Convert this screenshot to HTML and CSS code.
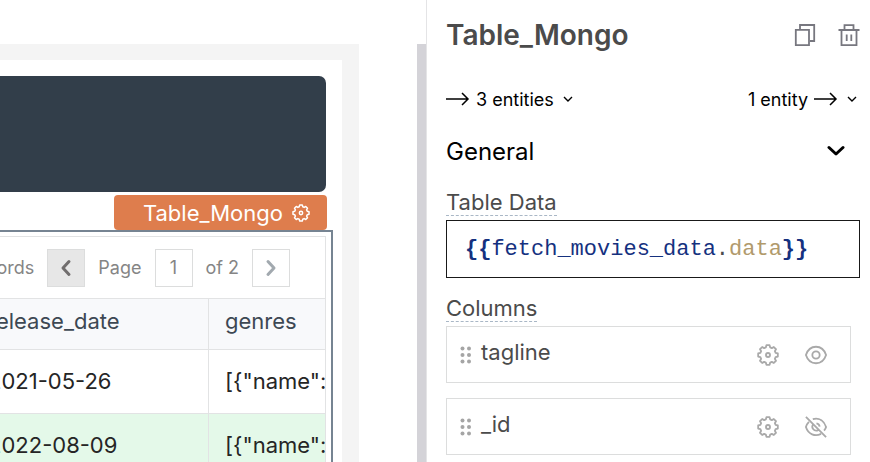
FILE: index.html
```html
<!DOCTYPE html>
<html lang="en">
<head>
<meta charset="utf-8">
<title>Table_Mongo</title>
<link rel="stylesheet" href="styles.css">
</head>
<body>
<svg class="sprite" aria-hidden="true">
  <symbol id="gear" viewBox="0 0 24 24">
    <path d="M10.300 1.300H13.700L14.400 3.700L16.200 4.500L18.350 3.300L20.700 5.650L19.500 7.800L20.300 9.600L22.700 10.300V13.700L20.300 14.400L19.500 16.200L20.700 18.350L18.350 20.700L16.200 19.500L14.400 20.300L13.700 22.700H10.300L9.600 20.300L7.800 19.500L5.650 20.700L3.300 18.350L4.500 16.200L3.700 14.400L1.300 13.700V10.300L3.700 9.600L4.500 7.800L3.300 5.650L5.650 3.300L7.800 4.500L9.600 3.700Z" fill="none" stroke="currentColor" stroke-width="2" stroke-linejoin="round"/>
    <circle cx="12" cy="12" r="2.2" fill="none" stroke="currentColor" stroke-width="2"/>
  </symbol>
  <symbol id="arrow" viewBox="0 0 24 16">
    <path d="M0 8H22M16 2L22 8L16 14" fill="none" stroke="currentColor" stroke-width="1.5"/>
  </symbol>
  <symbol id="chevron" viewBox="0 0 10 6">
    <path d="M1 1L5 5L9 1" fill="none" stroke="currentColor" stroke-width="1.4"/>
  </symbol>
  <symbol id="grip" viewBox="0 0 12 18">
    <g fill="currentColor"><circle cx="2.5" cy="2.5" r="2"/><circle cx="9" cy="2.5" r="2"/><circle cx="2.5" cy="9" r="2"/><circle cx="9" cy="9" r="2"/><circle cx="2.5" cy="15.5" r="2"/><circle cx="9" cy="15.5" r="2"/></g>
  </symbol>
</svg>
<div class="app">
  <main class="canvas">
    <div class="artboard">
      <div class="sheet">
        <div class="banner"></div>
        <div class="tag-row">
          <button class="tag" type="button">Table_Mongo<svg class="tag-gear"><use href="#gear"/></svg></button>
        </div>
        <section class="widget">
          <div class="widget-inner">
            <div class="toolbar">
              <span>Records</span>
              <button class="pager pager-off" type="button" aria-label="Previous page"><svg viewBox="0 0 12 18"><path d="M9 2.5L3 9L9 15.5" fill="none" stroke="currentColor" stroke-width="3" stroke-linecap="round" stroke-linejoin="round"/></svg></button>
              <label for="page">Page</label>
              <input id="page" class="page" type="text" value="1">
              <span>of 2</span>
              <button class="pager" type="button" aria-label="Next page"><svg viewBox="0 0 12 18"><path d="M3 2.5L9 9L3 15.5" fill="none" stroke="currentColor" stroke-width="3" stroke-linecap="round" stroke-linejoin="round"/></svg></button>
            </div>
            <div class="table-clip">
              <table>
                <colgroup><col class="col-date"><col class="col-genres"></colgroup>
                <thead><tr><th>release_date</th><th>genres</th></tr></thead>
                <tbody>
                  <tr><td>2021-05-26</td><td>[{"name":</td></tr>
                  <tr class="selected"><td>2022-08-09</td><td>[{"name":</td></tr>
                </tbody>
              </table>
            </div>
          </div>
        </section>
      </div>
    </div>
    <div class="scrollbar"></div>
  </main>
  <aside class="panel">
    <header class="panel-head">
      <h1>Table_Mongo</h1>
      <button class="icon-btn" type="button" aria-label="Copy"><svg class="head-icon" viewBox="0 0 22 22"><path d="M1.8 5.8H15V21.2H1.8Z M6 5V1H20.2V17H16" fill="none" stroke="currentColor" stroke-width="1.8"/></svg></button>
      <button class="icon-btn" type="button" aria-label="Delete"><svg class="head-icon" viewBox="0 0 22 22"><path d="M0.5 6H21.5M3.5 6V21.2H18.5V6M6.5 6V1.2H15.5V6M8.7 10.5V17M13.3 10.5V17" fill="none" stroke="currentColor" stroke-width="1.8"/></svg></button>
    </header>
    <div class="entities">
      <button class="entity" type="button"><svg class="arrow"><use href="#arrow"/></svg>3 entities<svg class="mini"><use href="#chevron"/></svg></button>
      <button class="entity" type="button">1 entity<svg class="arrow"><use href="#arrow"/></svg><svg class="mini"><use href="#chevron"/></svg></button>
    </div>
    <button class="section" type="button">General<svg viewBox="0 0 18 12"><path d="M2 2.5L9 9L16 2.5" fill="none" stroke="currentColor" stroke-width="3" stroke-linecap="round" stroke-linejoin="round"/></svg></button>
    <div class="label" id="data-label"><span>Table Data</span></div>
    <div class="code" role="textbox" contenteditable="true" spellcheck="false" aria-labelledby="data-label"><b>{{</b><span class="name">fetch_movies_data</span>.<span class="prop">data</span><b>}}</b></div>
    <div class="label"><span>Columns</span></div>
    <ul class="columns">
      <li>
        <svg class="grip"><use href="#grip"/></svg><span class="col-name">tagline</span>
        <button class="icon-btn" type="button" aria-label="Edit tagline"><svg class="item-icon"><use href="#gear"/></svg></button>
        <button class="icon-btn" type="button" aria-label="Hide tagline"><svg class="item-icon" viewBox="0 0 24 24"><g fill="none" stroke="currentColor" stroke-width="2"><path d="M1 12C3 6 7 3 12 3S21 6 23 12C21 18 17 21 12 21S3 18 1 12Z"/><circle cx="12" cy="12" r="4"/></g></svg></button>
      </li>
      <li>
        <svg class="grip"><use href="#grip"/></svg><span class="col-name">_id</span>
        <button class="icon-btn" type="button" aria-label="Edit _id"><svg class="item-icon"><use href="#gear"/></svg></button>
        <button class="icon-btn" type="button" aria-label="Show _id"><svg class="item-icon" viewBox="0 0 24 24"><g fill="none" stroke="currentColor" stroke-width="2"><path d="M1 1L23 23M8.500 3.500C16 1.500 21 6 23 12Q22.300 14.300 20.800 16M4.300 6.500Q2 8.800 1 12C3.500 20 11 22.800 17.500 19.500M8.800 9.300C6.500 12.500 9.500 17 14 15.600M12.500 8Q15.500 8.500 16 11.500"/></g></svg></button>
      </li>
    </ul>
  </aside>
</div>
</body>
</html>
```

FILE: styles.css
```css
* { box-sizing: border-box; }
body { margin: 0; font-family: Inter, "Liberation Sans", sans-serif; background: #fff; color: #4b4b4b; }
button { font: inherit; color: inherit; background: none; border: 0; padding: 0; }
svg { display: block; flex: none; }
.sprite { position: absolute; width: 0; height: 0; }

.app { display: flex; height: 100vh; overflow: hidden; }
.canvas { flex: 1; min-width: 0; display: flex; justify-content: space-between; padding-top: 44px; }
.artboard { flex: 1; min-width: 0; margin-right: 58px; padding: 16px 17px 0 0; background: #f4f4f4; }
.sheet { height: 100%; padding: 16px 9px 0 0; background: #fff; }
.scrollbar { width: 9px; background: #d4d3d8; }

.banner { height: 116px; margin-right: 7px; border-radius: 0 7px 7px 0; background: #323e4a; }
.tag-row { display: flex; justify-content: flex-end; padding: 3px 6px 0 0; }
.tag { display: flex; align-items: center; gap: 9px; height: 35px; padding: 0 17px 0 29px; border-radius: 4px; background: #de7d4d; color: #fff; font-size: 22px; }
.tag-gear { width: 18px; height: 18px; }
.widget { border: solid #768492; border-width: 2px 2px 0 0; padding: 4px 5px 0 0; }
.widget-inner { border: solid #e2e3e4; border-width: 1px 1px 0 0; }
.toolbar { display: flex; justify-content: flex-end; align-items: center; gap: 13px; height: 62px; padding-right: 35px; font-size: 18px; color: #858585; white-space: nowrap; border-bottom: 1px solid #e2e3e4; }
.pager { display: flex; flex: none; align-items: center; justify-content: center; width: 38px; height: 38px; border: 1px solid #dcdddd; color: #a2a9af; }
.pager svg { width: 12px; height: 18px; }
.pager-off { background: #e7e7e7; color: #716e6e; }
.page { flex: none; width: 38px; height: 38px; padding: 0; border: 1px solid #dcdddd; background: #fff; color: inherit; font: inherit; text-align: center; }
.table-clip { display: flex; justify-content: flex-end; overflow: hidden; }
table { flex: none; width: 353px; table-layout: fixed; border-collapse: separate; border-spacing: 0; }
.col-date { width: 237px; }
th, td { overflow: hidden; padding: 0 0 2px 16px; border-bottom: 1px solid #e2e3e4; text-align: left; font-weight: 400; font-size: 22px; white-space: nowrap; }
th:first-child, td:first-child { border-right: 1px solid #e2e3e4; }
th { height: 51px; padding-bottom: 6px; background: #f8f9fb; color: #3d4853; }
td { height: 64px; color: #252525; }
.selected td { background: #e4f9e9; }

.panel { flex: 0 0 444px; border-left: 1px solid #e4e4e6; padding: 0 10px 0 19px; }
.panel-head { display: flex; align-items: center; gap: 22px; height: 70px; }
h1 { flex: 1; margin: 0; font-size: 28px; font-weight: 600; }
.head-icon { width: 22px; height: 22px; color: #77777f; }
.entities { display: flex; justify-content: space-between; height: 58px; color: #000; font-size: 18px; }
.entity { display: flex; align-items: center; gap: 6px; }
.arrow { width: 24px; height: 16px; }
.mini { width: 10px; height: 6px; margin: 0 3px; }
.section { display: flex; align-items: center; justify-content: space-between; width: 100%; height: 46px; padding-right: 15px; color: #000; font-size: 24px; }
.section svg { width: 18px; height: 12px; }
.label { padding-top: 15px; height: 46px; font-size: 22px; line-height: 26px; }
.label span { display: inline-block; border-bottom: 1px dashed #a9b7c6; }
.code { height: 58px; margin-bottom: 2px; padding: 0 18px; border: 1px solid #191919; font: 22px/58px "Liberation Mono", monospace; white-space: nowrap; outline: 0; }
.code b, .name { color: #15317f; }
.prop { color: #b19a6c; }
.columns { display: grid; gap: 15px; margin: 0 9px 0 0; padding: 0; list-style: none; }
.columns li { display: flex; align-items: center; height: 57px; padding: 0 23px 0 13px; border: 1px solid #dcdddd; }
.grip { width: 12px; height: 18px; color: #a5a5a5; }
.col-name { flex: 1; margin-left: 9px; padding-bottom: 6px; font-size: 22px; }
.item-icon { width: 22px; height: 22px; color: #a9a9a9; }
.columns .icon-btn + .icon-btn { margin-left: 26px; }
```
